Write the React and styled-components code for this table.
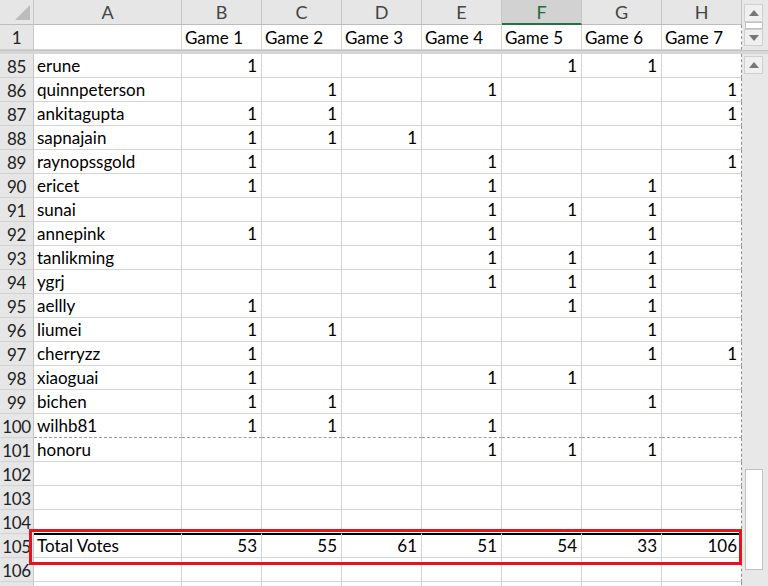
import React from "react";
import styled, { createGlobalStyle } from "styled-components";

const GlobalStyle = createGlobalStyle`
  html, body {
    margin: 0;
    padding: 0;
    background: #fff;
  }
  body {
    font-family: Lato, "Liberation Sans", Arial, sans-serif;
    overflow: hidden;
  }
`;

const COLS = "34px 148px repeat(7, 80px)";
const LETTERS = ["A", "B", "C", "D", "E", "F", "G", "H"];

const Window = styled.div`
  position: relative;
  width: 768px;
  height: 586px;
  display: flex;
  overflow: hidden;
  background: #fff;
`;

const Sheet = styled.div`
  width: 742px;
  display: flex;
  flex-direction: column;
`;

const Row = styled.div`
  display: grid;
  grid-template-columns: ${COLS};
  height: ${(p) => p.$h || 24}px;
  flex-shrink: 0;
`;

const Corner = styled.div`
  position: relative;
  box-sizing: border-box;
  background: #e6e6e6;
  border-right: 1px solid #c6c6c6;
  border-bottom: 1px solid #bdbdbd;

  svg {
    position: absolute;
    right: 3px;
    bottom: 4px;
  }
`;

const ColHead = styled.div`
  box-sizing: border-box;
  display: flex;
  align-items: center;
  justify-content: center;
  font-size: 18px;
  color: ${(p) => (p.$active ? "#1f6b40" : "#444")};
  background: ${(p) => (p.$active ? "#d2d2d2" : "#e6e6e6")};
  border-right: 1px solid #c6c6c6;
  border-bottom: ${(p) => (p.$active ? "2px solid #217346" : "1px solid #bdbdbd")};
`;

const RowHead = styled.div`
  box-sizing: border-box;
  display: flex;
  align-items: center;
  justify-content: center;
  padding: 1px 0 0 0;
  font-size: 17px;
  letter-spacing: -0.3px;
  color: #222;
  background: #e6e6e6;
  border-right: 1px solid #c6c6c6;
  border-bottom: 1px solid #d2d2d2;
`;

const Cell = styled.div`
  box-sizing: border-box;
  display: flex;
  align-items: center;
  justify-content: ${(p) => (p.$num ? "flex-end" : "flex-start")};
  padding: 0 4px 0 3px;
  font-size: 17px;
  color: #000;
  white-space: nowrap;
  border-right: 1px ${(p) => (p.$edge ? "dashed #8e8e8e" : "solid #d4d4d4")};
  border-bottom: 1px
    ${(p) =>
      p.$ruleBelow
        ? "solid #000"
        : p.$pageBreak
        ? "dashed #9c9c9c"
        : "solid #d4d4d4"};
  box-shadow: ${(p) => (p.$ruleAbove ? "inset 0 1px 0 #000" : "none")};
`;

const Split = styled.div`
  height: 4px;
  flex-shrink: 0;
  background: #d6d6d6;
  border-top: 1px solid #c4c4c4;
  box-sizing: border-box;
`;

const ScrollBar = styled.div`
  width: 26px;
  display: flex;
  flex-direction: column;
  background: #e8e8e8;
`;

const ScrollPane = styled.div`
  display: flex;
  flex-direction: column;
  padding: ${(p) => p.$pad};
  height: ${(p) => (p.$h ? `${p.$h}px` : "auto")};
  flex: ${(p) => (p.$h ? "none" : 1)};
  box-sizing: border-box;
`;

const ArrowBtn = styled.div`
  height: ${(p) => p.$h || 18}px;
  margin-left: 2px;
  width: 19px;
  box-sizing: border-box;
  background: #f0f0f0;
  border: 1px solid #d0d0d0;
  display: flex;
  align-items: center;
  justify-content: center;
`;

const Thumb = styled.div`
  margin-left: 3px;
  width: 18px;
  height: ${(p) => p.$h}px;
  margin-top: ${(p) => p.$top || 0}px;
  box-sizing: border-box;
  background: #fff;
  border: 1px solid #c2c2c2;
`;

const HighlightBox = styled.div`
  position: absolute;
  left: 29px;
  top: 529px;
  width: 713px;
  height: 36px;
  box-sizing: border-box;
  border: 3px solid #e5141c;
  pointer-events: none;
`;

const Arrow = ({ down }) => (
  <svg width="10" height="6" viewBox="0 0 10 6">
    <polygon
      points={down ? "0,0 10,0 5,6" : "0,6 10,6 5,0"}
      fill="#777"
    />
  </svg>
);

const rows = [
  [85, "erune", ["B", "F", "G"]],
  [86, "quinnpeterson", ["C", "E", "H"]],
  [87, "ankitagupta", ["B", "C", "H"]],
  [88, "sapnajain", ["B", "C", "D"]],
  [89, "raynopssgold", ["B", "E", "H"]],
  [90, "ericet", ["B", "E", "G"]],
  [91, "sunai", ["E", "F", "G"]],
  [92, "annepink", ["B", "E", "G"]],
  [93, "tanlikming", ["E", "F", "G"]],
  [94, "ygrj", ["E", "F", "G"]],
  [95, "aellly", ["B", "F", "G"]],
  [96, "liumei", ["B", "C", "G"]],
  [97, "cherryzz", ["B", "G", "H"]],
  [98, "xiaoguai", ["B", "E", "F"]],
  [99, "bichen", ["B", "C", "G"]],
  [100, "wilhb81", ["B", "C", "E"]],
  [101, "honoru", ["E", "F", "G"]],
  [102, "", []],
  [103, "", []],
  [104, "", []],
];

const totals = [53, 55, 61, 51, 54, 33, 106];
const blanks = ["", "", "", "", "", "", ""];

const DataRow = ({ num, name, values, h, text, pageBreak, ruleBelow, ruleAbove }) => (
  <Row $h={h}>
    <RowHead>{num}</RowHead>
    {LETTERS.map((l, i) => (
      <Cell
        key={l}
        $num={i > 0 && !text}
        $edge={l === "H"}
        $pageBreak={pageBreak}
        $ruleBelow={ruleBelow}
        $ruleAbove={ruleAbove}
      >
        {i === 0 ? name : values[i - 1]}
      </Cell>
    ))}
  </Row>
);

const App = () => (
  <>
    <GlobalStyle />
    <Window>
      <Sheet>
        <Row $h={25}>
          <Corner>
            <svg width="15" height="15" viewBox="0 0 15 15">
              <polygon points="15,0 15,15 0,15" fill="#bcbcbc" />
            </svg>
          </Corner>
          {LETTERS.map((l) => (
            <ColHead key={l} $active={l === "F"}>
              {l}
            </ColHead>
          ))}
        </Row>
        <DataRow
          num={1}
          name=""
          h={25}
          text
          values={["Game 1", "Game 2", "Game 3", "Game 4", "Game 5", "Game 6", "Game 7"]}
        />
        <Split />
        {rows.map(([num, name, hits]) => (
          <DataRow
            key={num}
            num={num}
            name={name}
            values={LETTERS.slice(1).map((l) => (hits.includes(l) ? 1 : ""))}
            pageBreak={num === 100}
            ruleBelow={num === 104}
          />
        ))}
        <DataRow num={105} name="Total Votes" values={totals} ruleAbove />
        <DataRow num={106} name="" values={blanks} />
        <DataRow num="" name="" values={blanks} />
      </Sheet>
      <ScrollBar>
        <ScrollPane $h={50} $pad="4px 0 0 0">
          <ArrowBtn>
            <Arrow />
          </ArrowBtn>
          <Thumb $h={7} />
          <ArrowBtn $h={17}>
            <Arrow down />
          </ArrowBtn>
        </ScrollPane>
        <Split />
        <ScrollPane $pad="2px 0 0 0">
          <ArrowBtn>
            <Arrow />
          </ArrowBtn>
          <Thumb $h={101} $top={395} />
        </ScrollPane>
      </ScrollBar>
      <HighlightBox />
    </Window>
  </>
);

export default App;
